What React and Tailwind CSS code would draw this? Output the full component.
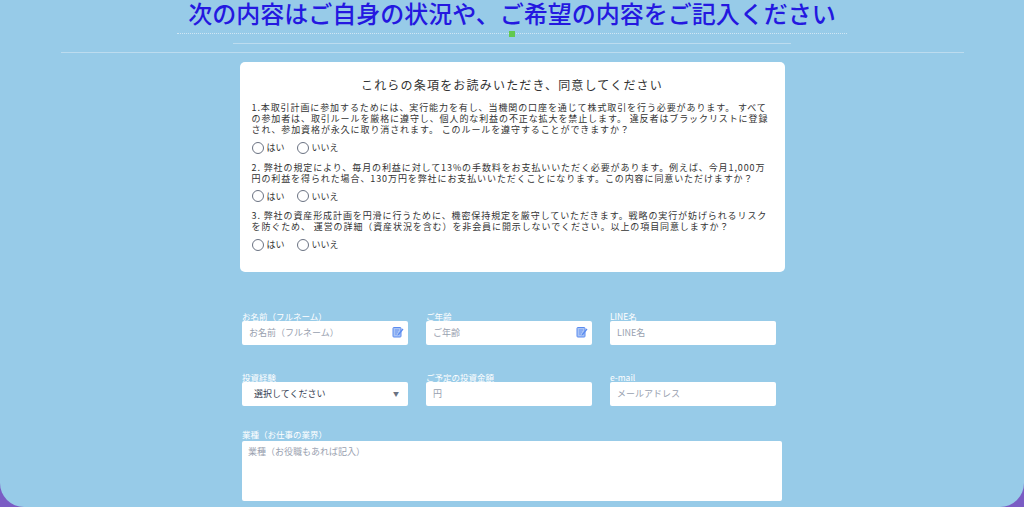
import React from 'react';

function EditIcon() {
  return (
    <svg width="12" height="12" viewBox="0 0 12 12" className="absolute right-[4px] top-[5px]">
      <rect x="1" y="1.5" width="8" height="9.5" rx="0.8" fill="#a9c4f5" stroke="#5b8bf0" strokeWidth="1" />
      <path d="M3 4h4M3 6h3M3 8h2" stroke="#5b8bf0" strokeWidth="0.8" />
      <path d="M10.5 2.5L6 8l-0.6 1.6L7 9l4.5-5.5z" fill="#5b8bf0" />
    </svg>
  );
}

function Radio({ label }) {
  return (
    <label className="flex items-center gap-[3px] mr-[12px]">
      <span className="w-[12px] h-[12px] rounded-full border border-gray-500 bg-white" />
      <span className="text-[9px]">{label}</span>
    </label>
  );
}

function Question({ text }) {
  return (
    <div className="mb-[7px]">
      <p className="text-[9px] leading-[11px] tracking-[0.1em]">{text}</p>
      <div className="flex mt-[6px] mb-[2px]">
        <Radio label="はい" />
        <Radio label="いいえ" />
      </div>
    </div>
  );
}

function Field({ label, placeholder, icon, select }) {
  return (
    <div className="w-[166px]">
      <div className="text-[8.5px] text-white h-[11px] mb-[0px]">{label}</div>
      <div className="relative h-[24px] bg-white rounded-[2px] flex items-center px-[7px] text-[9px]">
        {select ? (
          <>
            <span className="text-gray-700 pl-[5px]">選択してください</span>
            <span className="ml-auto text-[6px] text-gray-500 mr-[2px]">▼</span>
          </>
        ) : (
          <span className="text-gray-400">{placeholder}</span>
        )}
        {icon && <EditIcon />}
      </div>
    </div>
  );
}

export default function App() {
  return (
    <div className="w-[1024px] h-[507px] overflow-hidden bg-[#7a5cc4]" style={{ fontFamily: '"Noto Sans CJK JP", "Noto Sans", sans-serif' }}>
      <div className="h-full bg-[#97cbe8] rounded-b-[24px] flex flex-col items-center">
        <h1 className="text-[24px] leading-[26px] font-medium text-[#2418e0] whitespace-nowrap">次の内容はご自身の状況や、ご希望の内容をご記入ください</h1>
        <div className="relative w-[670px] mt-[7px] border-t border-dotted border-[#cfe6f4]">
          <span className="absolute left-[332px] top-[-3px] w-[6px] h-[6px] bg-[#62c94f]" />
        </div>
        <div className="w-[558px] mt-[9px] h-[1px] bg-[#bcdcef]" />
        <div className="w-[903px] mt-[8px] h-[1px] bg-[#bcdcef]" />

        <div className="w-[545px] mt-[9px] bg-white rounded-[5px] px-[12px] pt-[14px] pb-[13px] text-[#333]">
          <h2 className="text-center text-[12px] tracking-[0.1em] mb-[8px]">これらの条項をお読みいただき、同意してください</h2>
          <Question text="1.本取引計画に参加するためには、実行能力を有し、当機関の口座を通じて株式取引を行う必要があります。 すべての参加者は、取引ルールを厳格に遵守し、個人的な利益の不正な拡大を禁止します。 違反者はブラックリストに登録され、参加資格が永久に取り消されます。 このルールを遵守することができますか？" />
          <Question text="2. 弊社の規定により、毎月の利益に対して13%の手数料をお支払いいただく必要があります。例えば、今月1,000万円の利益を得られた場合、130万円を弊社にお支払いいただくことになります。この内容に同意いただけますか？" />
          <Question text="3. 弊社の資産形成計画を円滑に行うために、機密保持規定を厳守していただきます。戦略の実行が妨げられるリスクを防ぐため、 運営の詳細（資産状況を含む）を非会員に開示しないでください。以上の項目同意しますか？" />
        </div>

        <div className="w-[540px] mt-[38px]">
          <div className="flex gap-[18px]">
            <Field label="お名前（フルネーム）" placeholder="お名前（フルネーム）" icon />
            <Field label="ご年齢" placeholder="ご年齢" icon />
            <Field label="LINE名" placeholder="LINE名" />
          </div>
          <div className="flex gap-[18px] mt-[26px]">
            <Field label="投資経験" select />
            <Field label="ご予定の投資金額" placeholder="円" />
            <Field label="e-mail" placeholder="メールアドレス" />
          </div>
          <div className="mt-[22px]">
            <div className="text-[8.5px] text-white mb-[1px]">業種（お仕事の業界）</div>
            <div className="w-[540px] h-[60px] bg-white rounded-[2px] px-[6px] py-[4px] text-[9px] text-gray-400">業種（お役職もあれば記入）</div>
          </div>
        </div>
      </div>
    </div>
  );
}
